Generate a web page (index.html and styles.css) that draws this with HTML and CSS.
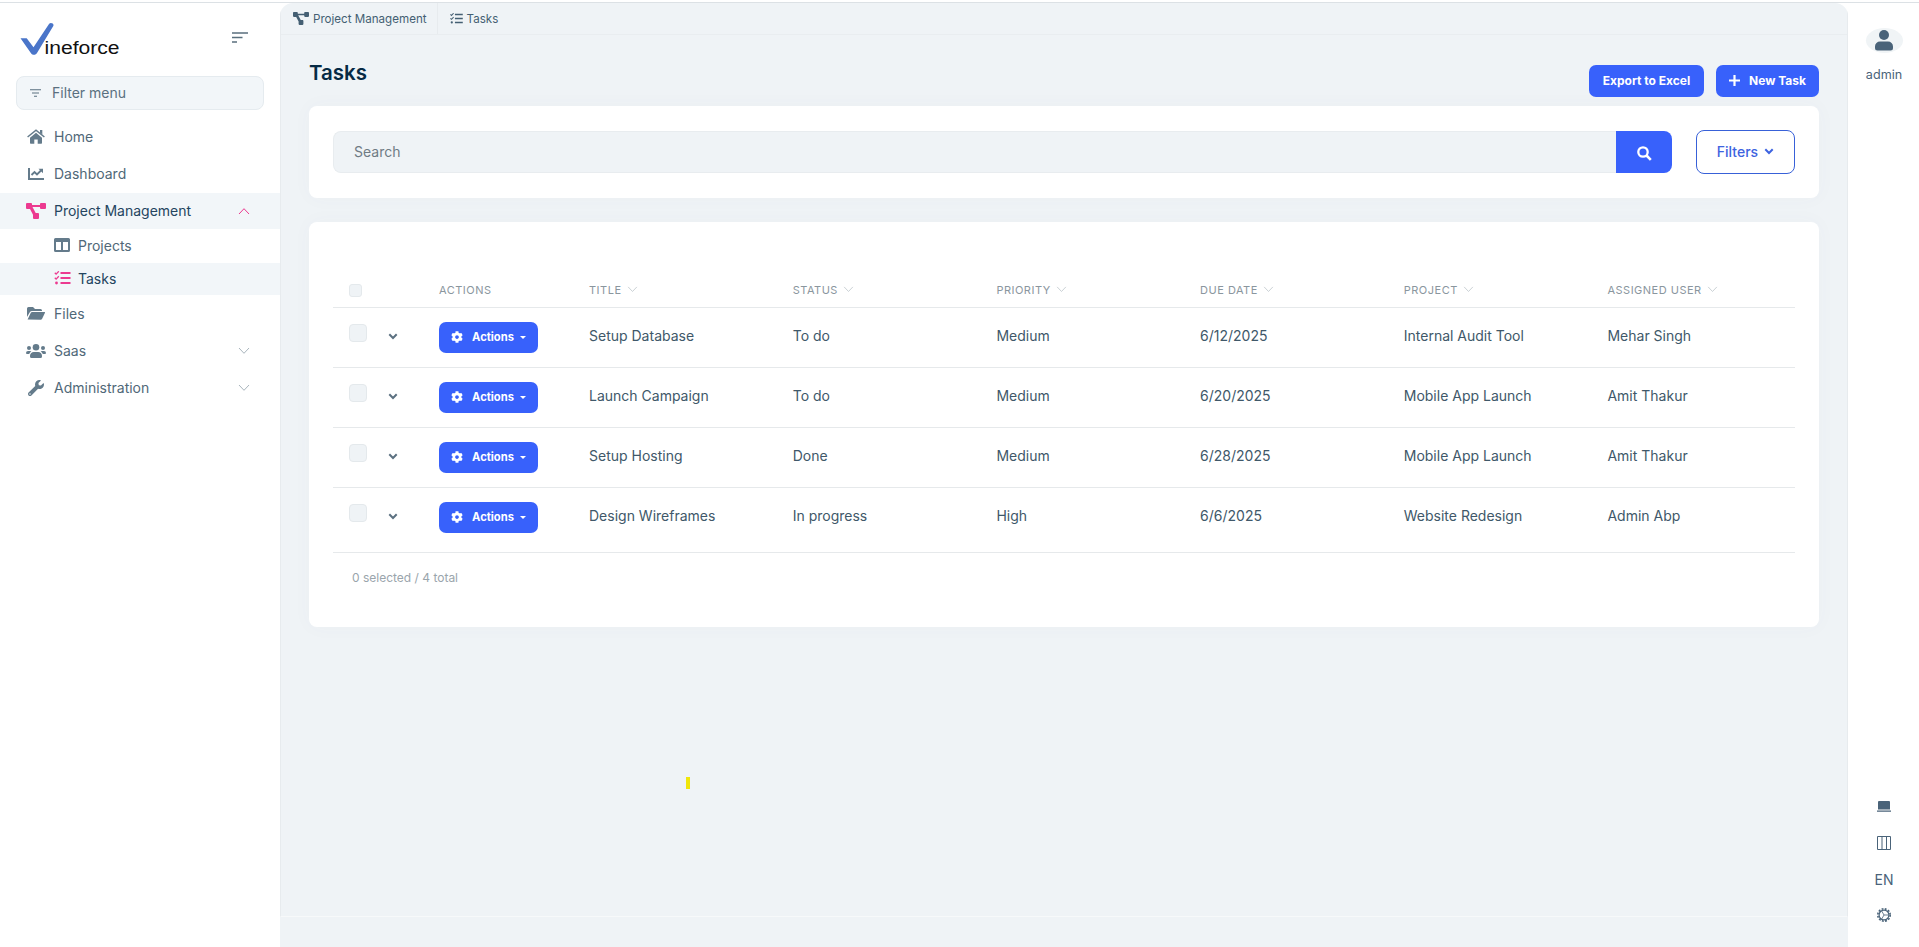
FILE: index.html
```html
<!DOCTYPE html>
<html lang="en">

<head>
    <title>Tasks</title>
    <meta charset="utf-8">
    <meta name="viewport" content="width=device-width, initial-scale=1">
    <link rel="stylesheet" href="styles.css">
</head>

<body>
    <!-- icons used more than once -->
    <svg class="sprite">
        <symbol id="diagram" viewBox="0 0 20 16">
            <path d="M1 0h4a1 1 0 0 1 1 1v1h8V1a1 1 0 0 1 1-1h4a1 1 0 0 1 1 1v4a1 1 0 0 1-1 1h-4a1 1 0 0 1-1-1V4H6.500l3.200 6H12a1 1 0 0 1 1 1v4a1 1 0 0 1-1 1H8a1 1 0 0 1-1-1v-3.300L4 6H1a1 1 0 0 1-1-1V1a1 1 0 0 1 1-1z" />
        </symbol>
        <symbol id="tasks" viewBox="0 0 16 14">
            <path d="M6 2h10M6 7h10M6 12h10" fill="none" stroke="currentColor" stroke-width="1.800" />
            <path d="M.3 1.800l1.300 1.300L4.300.3M.3 6.800l1.300 1.300 2.700-2.800" fill="none" stroke="currentColor" stroke-width="1.300" />
            <circle cx="2" cy="12" r="1.400" />
        </symbol>
        <symbol id="gear" viewBox="0 0 512 512">
            <path d="M487.400 315.700l-42.600-24.600c4.300-23.200 4.300-47 0-70.200l42.600-24.600c4.900-2.800 7.100-8.600 5.500-14-11.100-35.600-30-67.800-54.700-94.600-3.800-4.100-10-5.100-14.800-2.300L380.800 110c-17.900-15.400-38.500-27.300-60.800-35.100V25.800c0-5.600-3.900-10.500-9.400-11.700-36.700-8.200-74.300-7.800-109.200 0-5.500 1.200-9.400 6.100-9.400 11.700V75c-22.200 7.900-42.800 19.800-60.800 35.100L88.700 85.500c-4.900-2.800-11-1.900-14.800 2.300-24.700 26.700-43.600 58.900-54.700 94.600-1.700 5.400.6 11.200 5.500 14L67.300 221c-4.300 23.200-4.300 47 0 70.200l-42.600 24.600c-4.900 2.800-7.100 8.600-5.500 14 11.100 35.600 30 67.800 54.700 94.600 3.800 4.100 10 5.100 14.800 2.300l42.600-24.600c17.900 15.400 38.500 27.300 60.800 35.100v49.200c0 5.600 3.900 10.500 9.400 11.700 36.700 8.200 74.300 7.800 109.200 0 5.500-1.200 9.400-6.100 9.400-11.700v-49.200c22.200-7.900 42.800-19.800 60.800-35.100l42.600 24.600c4.900 2.800 11 1.900 14.800-2.300 24.700-26.700 43.600-58.900 54.700-94.600 1.500-5.500-.7-11.300-5.600-14.100zM256 336c-44.100 0-80-35.900-80-80s35.900-80 80-80 80 35.900 80 80-35.900 80-80 80z" />
        </symbol>
        <symbol id="angle" viewBox="0 0 12 8">
            <path d="M1 1l5 5.300L11 1" fill="none" stroke="currentColor" />
        </symbol>
        <symbol id="chevron" viewBox="0 0 10 7">
            <path d="M1.300 1.300L5 5l3.700-3.700" fill="none" stroke="currentColor" stroke-width="2" />
        </symbol>
    </svg>

    <div class="layout">
        <aside class="sidebar">
            <div class="brand">
                <svg class="logo" width="100" height="34" viewBox="0 0 100 34">
                    <path d="M.5 15.200h6.200l6.800 9L29 1c1.500-2 5.500-.5 4.300 2L17 30c-1.200 2.300-4.500 2.300-6 .2z" fill="#4a75c9" />
                    <text x="24.500" y="31" textLength="75" lengthAdjust="spacingAndGlyphs">ineforce</text>
                </svg>
                <svg class="toggle" width="16" height="11" viewBox="0 0 16 11">
                    <path d="M0 1h16M0 5.500h10.500M0 10h5" fill="none" stroke="currentColor" stroke-width="1.500" />
                </svg>
            </div>

            <div class="filter-menu">
                <svg width="11" height="8" viewBox="0 0 11 8">
                    <path d="M0 .7h11M2 4h7M4 7.300h3" fill="none" stroke="currentColor" stroke-width="1.100" />
                </svg>
                <span>Filter menu</span>
            </div>

            <nav class="menu">
                <a class="item">
                    <span class="ico"><svg width="18" height="15" viewBox="0 0 18 15">
                        <path d="M9 3.700l6 5V14a.7.7 0 0 1-.7.7h-3.600v-4.200H7.300v4.200H3.700A.7.700 0 0 1 3 14V8.700z" />
                        <path d="M.6 8L9 1.200 17.400 8" fill="none" stroke="currentColor" stroke-width="1.500" />
                        <path d="M13 1h2.300v4.500L13 3.700z" />
                    </svg></span>
                    <span>Home</span>
                </a>
                <a class="item">
                    <span class="ico"><svg width="16" height="12" viewBox="0 0 16 12">
                        <path d="M1 0v11h15" fill="none" stroke="currentColor" stroke-width="2" />
                        <path d="M3.500 7l3-3 2.500 2.500L13.500 2" fill="none" stroke="currentColor" stroke-width="1.900" />
                        <path d="M10.500.8H15v4.500z" />
                    </svg></span>
                    <span>Dashboard</span>
                </a>
                <a class="item open">
                    <span class="ico"><svg width="20" height="16"><use href="#diagram" /></svg></span>
                    <span>Project Management</span>
                    <svg class="arrow up" width="12" height="8"><use href="#angle" /></svg>
                </a>
                <div class="submenu">
                    <a class="subitem">
                        <span class="ico"><svg width="16" height="14" viewBox="0 0 16 14">
                            <path fill-rule="evenodd" d="M1.500 0h13A1.500 1.500 0 0 1 16 1.500v11a1.500 1.500 0 0 1-1.500 1.500h-13A1.500 1.500 0 0 1 0 12.500v-11A1.500 1.500 0 0 1 1.500 0zM2 4v8h5V4zM9 4v8h5V4z" />
                        </svg></span>
                        <span>Projects</span>
                    </a>
                    <a class="subitem active">
                        <span class="ico"><svg width="17" height="14"><use href="#tasks" /></svg></span>
                        <span>Tasks</span>
                    </a>
                </div>
                <a class="item">
                    <span class="ico"><svg width="18" height="13" viewBox="0 0 18 13">
                        <path d="M0 10V1.500A1.500 1.500 0 0 1 1.500 0H6l2 2h5.500A1.500 1.500 0 0 1 15 3.500V4H5a2.500 2.500 0 0 0-2.200 1.300z" />
                        <path d="M.6 12.500l3.200-6.700A1.500 1.500 0 0 1 5.100 5H17.500a.5.500 0 0 1 .5.800l-3 6.200a1.500 1.500 0 0 1-1.300.8z" />
                    </svg></span>
                    <span>Files</span>
                </a>
                <a class="item">
                    <span class="ico"><svg width="20" height="14" viewBox="0 0 20 14">
                        <circle cx="10" cy="3.300" r="3.300" />
                        <circle cx="3" cy="4" r="2" />
                        <circle cx="17" cy="4" r="2" />
                        <path d="M4 12.500a4 4 0 0 1 4-4.500h4a4 4 0 0 1 4 4.500 1.500 1.500 0 0 1-1.500 1.500h-9A1.500 1.500 0 0 1 4 12.500zM0 9a2 2 0 0 1 2-2h2a2 2 0 0 1 1.400.6A5 5 0 0 0 3.200 10H1a1 1 0 0 1-1-1zM20 9a2 2 0 0 0-2-2h-2a2 2 0 0 0-1.400.6 5 5 0 0 1 2.200 2.400H19a1 1 0 0 0 1-1z" />
                    </svg></span>
                    <span>Saas</span>
                    <svg class="arrow" width="12" height="8"><use href="#angle" /></svg>
                </a>
                <a class="item">
                    <span class="ico"><svg width="16" height="16" viewBox="0 0 512 512">
                        <path d="M507.700 109.100c-2.200-9-13.500-12.100-20.100-5.500l-74.400 74.400-67.900-11.300L334 98.900l74.400-74.400c6.600-6.600 3.400-17.900-5.700-20.200-47.400-11.700-99.600.9-136.600 37.900-39.600 39.600-50.500 97.100-34.100 147.200L18.700 402.800c-25 25-25 65.500 0 90.500s65.500 25 90.500 0l213.200-213.200c50.100 16.700 107.500 5.700 147.400-34.200 37.100-37.100 49.700-89.300 37.900-136.800zM64 472c-13.200 0-24-10.800-24-24 0-13.300 10.700-24 24-24s24 10.700 24 24c0 13.200-10.700 24-24 24z" />
                    </svg></span>
                    <span>Administration</span>
                    <svg class="arrow" width="12" height="8"><use href="#angle" /></svg>
                </a>
            </nav>
        </aside>

        <main class="main">
            <div class="page">
                <div class="breadcrumb">
                    <div class="crumb">
                        <svg width="16" height="13"><use href="#diagram" /></svg>
                        <span>Project Management</span>
                    </div>
                    <div class="crumb">
                        <svg width="13" height="11"><use href="#tasks" /></svg>
                        <span>Tasks</span>
                    </div>
                </div>

                <div class="content">
                    <div class="page-head">
                        <h1>Tasks</h1>
                        <div class="page-actions">
                            <button class="btn">Export to Excel</button>
                            <button class="btn new">
                                <svg width="11" height="11" viewBox="0 0 11 11"><path d="M5.500 0v11M0 5.500h11" stroke="#fff" stroke-width="2.200" /></svg>
                                <span>New Task</span>
                            </button>
                        </div>
                    </div>

                    <div class="card search-card">
                        <div class="search">
                            <input type="text" placeholder="Search">
                            <button class="search-btn">
                                <svg width="15" height="15" viewBox="0 0 15 15"><circle cx="6" cy="6" r="4.700" fill="none" stroke="#fff" stroke-width="2.300" /><path d="M9.500 9.500l4.300 4.300" stroke="#fff" stroke-width="2.600" /></svg>
                            </button>
                        </div>
                        <button class="filters">
                            <span>Filters</span>
                            <svg width="10" height="7"><use href="#chevron" /></svg>
                        </button>
                    </div>

                    <div class="card table-card">
                        <div class="row head">
                            <span class="check small"></span>
                            <span></span>
                            <span>Actions</span>
                            <span>Title <svg class="sort" width="11" height="7"><use href="#angle" /></svg></span>
                            <span>Status <svg class="sort" width="11" height="7"><use href="#angle" /></svg></span>
                            <span>Priority <svg class="sort" width="11" height="7"><use href="#angle" /></svg></span>
                            <span>Due date <svg class="sort" width="11" height="7"><use href="#angle" /></svg></span>
                            <span>Project <svg class="sort" width="11" height="7"><use href="#angle" /></svg></span>
                            <span>Assigned user <svg class="sort" width="11" height="7"><use href="#angle" /></svg></span>
                        </div>
                        <div class="row">
                            <span class="check"></span>
                            <svg class="expand" width="10" height="7"><use href="#chevron" /></svg>
                            <button class="btn action"><svg width="12" height="12"><use href="#gear" /></svg><span>Actions</span><i class="caret"></i></button>
                            <span>Setup Database</span>
                            <span>To do</span>
                            <span>Medium</span>
                            <span>6/12/2025</span>
                            <span>Internal Audit Tool</span>
                            <span>Mehar Singh</span>
                        </div>
                        <div class="row">
                            <span class="check"></span>
                            <svg class="expand" width="10" height="7"><use href="#chevron" /></svg>
                            <button class="btn action"><svg width="12" height="12"><use href="#gear" /></svg><span>Actions</span><i class="caret"></i></button>
                            <span>Launch Campaign</span>
                            <span>To do</span>
                            <span>Medium</span>
                            <span>6/20/2025</span>
                            <span>Mobile App Launch</span>
                            <span>Amit Thakur</span>
                        </div>
                        <div class="row">
                            <span class="check"></span>
                            <svg class="expand" width="10" height="7"><use href="#chevron" /></svg>
                            <button class="btn action"><svg width="12" height="12"><use href="#gear" /></svg><span>Actions</span><i class="caret"></i></button>
                            <span>Setup Hosting</span>
                            <span>Done</span>
                            <span>Medium</span>
                            <span>6/28/2025</span>
                            <span>Mobile App Launch</span>
                            <span>Amit Thakur</span>
                        </div>
                        <div class="row last">
                            <span class="check"></span>
                            <svg class="expand" width="10" height="7"><use href="#chevron" /></svg>
                            <button class="btn action"><svg width="12" height="12"><use href="#gear" /></svg><span>Actions</span><i class="caret"></i></button>
                            <span>Design Wireframes</span>
                            <span>In progress</span>
                            <span>High</span>
                            <span>6/6/2025</span>
                            <span>Website Redesign</span>
                            <span>Admin Abp</span>
                        </div>
                        <div class="total">0 selected / 4 total</div>
                    </div>
                </div>
                <div class="marker"></div>
            </div>
        </main>

        <aside class="rail">
            <div class="user">
                <div class="avatar">
                    <svg width="18" height="21" viewBox="0 0 18 21"><circle cx="9" cy="5" r="5" /><path d="M0 18v-1.500a5 5 0 0 1 5-5h8a5 5 0 0 1 5 5V18a2.500 2.500 0 0 1-2.500 2.500h-13A2.500 2.500 0 0 1 0 18z" /></svg>
                </div>
                <span>admin</span>
            </div>
            <div class="tools">
                <svg width="14" height="11" viewBox="0 0 14 11"><path d="M2 0h10a1 1 0 0 1 1 1v7.500H1V1a1 1 0 0 1 1-1zM0 9.500h14v1.200H0z" /></svg>
                <svg width="14" height="14" viewBox="0 0 14 14"><path d="M.5.500h13v13H.5zM5 .5v13M9.500.5v13" fill="none" stroke="currentColor" /></svg>
                <span>EN</span>
                <svg width="14" height="14" viewBox="0 0 14 14">
                    <circle cx="7" cy="7" r="6.200" fill="none" stroke="currentColor" stroke-width="1.600" stroke-dasharray="1.900 1.350" />
                    <circle cx="7" cy="7" r="4.900" fill="none" stroke="currentColor" stroke-width="1.200" />
                    <path d="M7 7h4.500M7 7L4.700 3M7 7l-2.300 4" stroke="currentColor" stroke-width=".8" />
                </svg>
            </div>
        </aside>
    </div>
</body>

</html>
```
FILE: styles.css
```css
* {
    box-sizing: border-box;
}

body {
    margin: 0;
    font-family: Inter, "Liberation Sans", sans-serif;
    font-size: 14px;
    line-height: 20px;
    color: #445f73;
    background: #fff;
}

svg {
    display: block;
    flex: none;
    fill: currentColor;
}

button {
    font-family: inherit;
    border: 0;
    padding: 0;
}

.sprite {
    display: none;
}

.layout {
    display: flex;
    height: 100vh;
    padding-top: 1px;
    border-top: 2px solid #fff;
    box-shadow: inset 0 1px 0 #dce1e5;
    overflow: hidden;
}

/* sidebar */
.sidebar {
    width: 280px;
    flex: none;
}

.brand {
    height: 73px;
    display: flex;
    justify-content: space-between;
    padding: 20px 32px 0 20px;
}

.logo text {
    font-family: "Liberation Sans", sans-serif;
    font-size: 17.5px;
    fill: #111;
}

.toggle {
    margin-top: 9px;
    color: #596f7d;
}

.filter-menu {
    height: 34px;
    margin: 0 16px 9px;
    padding: 0 13px;
    display: flex;
    align-items: center;
    gap: 11px;
    background: #f2f6f9;
    border: 1px solid #e5ebef;
    border-radius: 8px;
    color: #5a7080;
}

.item {
    height: 36px;
    margin-bottom: 1px;
    padding: 0 30px 0 26px;
    display: flex;
    align-items: center;
    color: #506878;
}

.item .ico {
    width: 20px;
    margin-right: 8px;
    display: flex;
    justify-content: center;
    margin-top: -1px;
    color: #647b8b;
}

.item.open {
    margin-bottom: 0;
    background: #f2f6f9;
    color: #244560;
}

.item.open .ico,
.subitem.active .ico {
    color: #ec3a90;
}

.arrow {
    margin-left: auto;
    color: #a9b5bd;
}

.arrow.up {
    transform: rotate(180deg);
    color: #ec3a90;
}

.submenu {
    padding-bottom: 1px;
}

.subitem {
    height: 32px;
    padding-left: 54px;
    display: flex;
    align-items: center;
    gap: 8px;
    color: #506878;
}

.subitem:first-child {
    height: 34px;
}

.subitem .ico {
    width: 16px;
    margin-top: -2px;
    color: #647b8b;
}

.subitem.active {
    background: #f2f6f9;
    color: #244560;
}

/* main area */
.main {
    flex: 1;
    min-width: 0;
    background: #eff3f6;
    border-radius: 13px 13px 0 0;
    overflow: hidden;
}

.page {
    height: 914px;
    position: relative;
    border: 1px solid #e7ebee;
    border-top: 0;
    border-bottom-color: #f7f9fa;
}

.breadcrumb {
    height: 32px;
    display: flex;
    border-bottom: 1px solid #e9edf0;
    font-size: 11.6px;
}

.crumb {
    display: flex;
    align-items: center;
    gap: 4px;
    padding: 0 10px 0 12px;
    border-right: 1px solid #e7ebee;
}

.crumb:last-child {
    border: 0;
}

.content {
    padding: 0 28px;
}

.page-head {
    height: 71px;
    display: flex;
    justify-content: space-between;
}

h1 {
    margin: 25px 0 0;
    font-size: 20.5px;
    line-height: 26px;
    font-weight: 600;
    color: #062a44;
}

.page-actions {
    display: flex;
    gap: 12px;
    padding-top: 30px;
}

.btn {
    height: 32px;
    width: 115px;
    padding-bottom: 1px;
    border-radius: 7px;
    background: #3861fb;
    color: #fff;
    font-size: 12px;
    font-weight: 700;
    display: flex;
    align-items: center;
    justify-content: center;
}

.btn.new {
    width: 103px;
    gap: 9px;
}

.card {
    background: #fff;
    border-radius: 8px;
    box-shadow: 0 0 20px rgba(80, 100, 130, .03);
}

.search-card {
    height: 92px;
    margin-bottom: 24px;
    padding: 24px;
    display: flex;
    align-items: center;
    gap: 24px;
}

.search {
    flex: 1;
    height: 42px;
    display: flex;
}

.search input {
    flex: 1;
    padding: 0 20px 2px;
    border: 1px solid #e8ecef;
    border-right: 0;
    border-radius: 8px 0 0 8px;
    background: #eff3f6;
    font-family: inherit;
    font-size: 14px;
}

.search input::placeholder {
    color: #6f7b84;
}

.search-btn {
    width: 56px;
    padding-top: 3px;
    border-radius: 0 8px 8px 0;
    background: #3861fb;
    display: flex;
    align-items: center;
    justify-content: center;
}

.filters {
    width: 99px;
    height: 44px;
    padding-bottom: 2px;
    border: 1px solid #3861d8;
    border-radius: 8px;
    background: #fff;
    color: #3d63e0;
    font-size: 14px;
    font-weight: 500;
    display: flex;
    align-items: center;
    justify-content: center;
    gap: 6px;
}

/* table */
.table-card {
    height: 405px;
    padding: 50px 24px 0;
}

.row {
    height: 60px;
    padding-left: 16px;
    border-bottom: 1px solid #e6e9eb;
    display: grid;
    grid-template-columns: 40px 50px 150px repeat(5, 203.7px) 1fr;
    align-items: center;
    color: #405869;
}

.row > span {
    display: flex;
    align-items: center;
    margin-top: -3px;
}

.row.head {
    height: 36px;
    font-size: 11px;
    letter-spacing: .5px;
    text-transform: uppercase;
    color: #8a969e;
}

.row.head > span {
    margin-top: 1px;
}

.row.last {
    height: 65px;
    padding-bottom: 5px;
}

.sort {
    margin: -1px 0 0 5px;
    color: #c3cbd0;
}

.row .check {
    width: 18px;
    height: 18px;
    margin-top: -9px;
    border: 1px solid #e4e9ec;
    border-radius: 4px;
    background: #eff3f6;
}

.row .check.small {
    width: 13px;
    height: 13px;
    margin-top: 1px;
    border-radius: 3px;
}

.expand {
    margin: -2px 0 0 -1px;
    color: #5c7181;
}

.action {
    width: 99px;
    height: 31px;
    gap: 9px;
    font-size: 11.2px;
}

.caret {
    margin-left: -3px;
    border: 3px solid transparent;
    border-top-color: #fff;
    border-bottom: 0;
}

.total {
    padding: 15px 19px;
    font-size: 12px;
    color: #9aa5ac;
}

/* stray highlight on the page background */
.marker {
    position: absolute;
    left: 405px;
    top: 774px;
    width: 4px;
    height: 12px;
    background: #f0e60a;
}

/* right toolbar */
.rail {
    width: 71px;
    flex: none;
    display: flex;
    flex-direction: column;
    justify-content: space-between;
    align-items: center;
    padding: 25px 0 25px 1px;
    color: #4a6379;
}

.user {
    display: flex;
    flex-direction: column;
    align-items: center;
    gap: 12px;
    font-size: 12.6px;
}

.avatar {
    width: 37px;
    height: 25px;
    display: flex;
    align-items: center;
    justify-content: center;
    border-radius: 50%;
    background: #f0f4f6;
}

.tools {
    display: flex;
    flex-direction: column;
    align-items: center;
}

.tools svg:nth-child(1) {
    margin-bottom: 24px;
}

.tools svg:nth-child(2) {
    margin-bottom: 20px;
}

.tools span {
    margin-bottom: 18px;
}
```
